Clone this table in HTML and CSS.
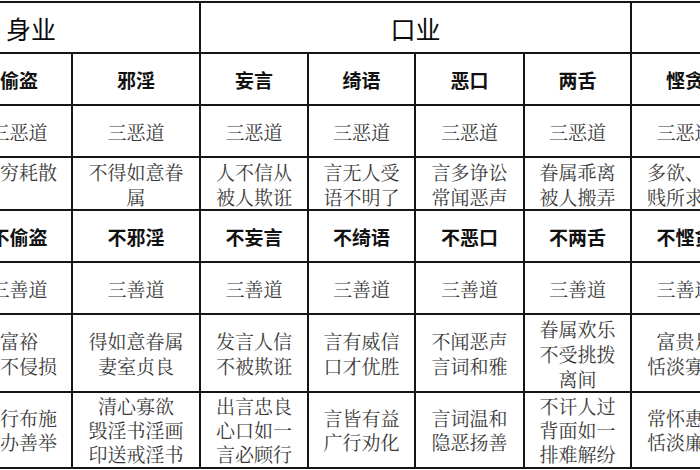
FILE: index.html
```html
<!DOCTYPE html>
<html lang="zh">
<head>
<meta charset="utf-8">
<title>十业</title>
<link rel="stylesheet" href="styles.css">
</head>
<body>
<div class="frame">
<table class="karma">
<colgroup>
<col class="c-shasheng"><col class="c-toudao"><col class="c-xieyin"><col class="c-wangyan"><col class="c-qiyu"><col class="c-ekou"><col class="c-liangshe"><col class="c-qiantan"><col class="c-chenhui"><col class="c-xiejian">
</colgroup>
<tr class="r-group">
<th colspan="3" class="group">身业</th>
<th colspan="4" class="group">口业</th>
<th colspan="3" class="group">意业</th>
</tr>
<tr class="r-head">
<th>杀生</th><th>偷盗</th><th>邪淫</th><th>妄言</th><th>绮语</th><th>恶口</th><th>两舌</th><th>悭贪</th><th>嗔恚</th><th>邪见</th>
</tr>
<tr class="r-fate">
<td>三恶道</td><td>三恶道</td><td>三恶道</td><td>三恶道</td><td>三恶道</td><td>三恶道</td><td>三恶道</td><td>三恶道</td><td>三恶道</td><td>三恶道</td>
</tr>
<tr class="r-result">
<td>短命多病</td><td>贫穷耗散</td><td>不得如意眷<br>属</td><td>人不信从<br>被人欺诳</td><td>言无人受<br>语不明了</td><td>言多诤讼<br>常闻恶声</td><td>眷属乖离<br>被人搬弄</td><td>多欲、贫<br>贱所求难</td><td>常被他人<br>求其长短</td><td>邪见家生<br>其心谄曲</td>
</tr>
<tr class="r-head">
<th>不杀生</th><th>不偷盗</th><th>不邪淫</th><th>不妄言</th><th>不绮语</th><th>不恶口</th><th>不两舌</th><th>不悭贪</th><th>不嗔恚</th><th>不邪见</th>
</tr>
<tr class="r-fate">
<td>三善道</td><td>三善道</td><td>三善道</td><td>三善道</td><td>三善道</td><td>三善道</td><td>三善道</td><td>三善道</td><td>三善道</td><td>三善道</td>
</tr>
<tr class="r-good">
<td>长寿<br>少病</td><td>富裕<br>财不侵损</td><td>得如意眷属<br>妻室贞良</td><td>发言人信<br>不被欺诳</td><td>言有威信<br>口才优胜</td><td>不闻恶声<br>言词和雅</td><td>眷属欢乐<br>不受挑拨<br>离间</td><td>富贵足<br>恬淡寡欲</td><td>相貌端严<br>人皆敬爱</td><td>正信正见<br>智慧明达</td>
</tr>
<tr class="r-deed">
<td>放生<br>护生</td><td>广行布施<br>多办善举</td><td>清心寡欲<br>毁淫书淫画<br>印送戒淫书</td><td>出言忠良<br>心口如一<br>言必顾行</td><td>言皆有益<br>广行劝化</td><td>言词温和<br>隐恶扬善</td><td>不讦人过<br>背面如一<br>排难解纷</td><td>常怀惠施<br>恬淡廉洁</td><td>忍辱柔和<br>慈悲待人</td><td>深信因果<br>亲近善友</td>
</tr>
</table>
</div>
</body>
</html>
```
FILE: styles.css
```css
html, body {
  margin: 0;
  padding: 0;
  background: #ffffff;
  overflow: hidden;
}

.frame {
  width: 700px;
  height: 470px;
  overflow: hidden;
  padding-top: 1px;
}

.karma {
  border-collapse: collapse;
  table-layout: fixed;
  width: 1083px;
  margin-left: -139px;
  font-family: "Noto Serif CJK SC", "Noto Sans CJK SC", sans-serif;
}

.c-shasheng { width: 104px; }
.c-toudao { width: 106px; }
.c-xieyin { width: 128px; }
.c-wangyan { width: 108px; }
.c-qiyu { width: 107px; }
.c-ekou { width: 109px; }
.c-liangshe { width: 107px; }
.c-qiantan { width: 108px; }
.c-chenhui { width: 108px; }
.c-xiejian { width: 108px; }

.karma th,
.karma td {
  border: 2px solid #151515;
  padding: 0;
  text-align: center;
  vertical-align: middle;
  overflow: hidden;
  white-space: nowrap;
}

.karma th {
  font-family: "Noto Sans CJK SC", sans-serif;
  font-weight: 700;
  font-size: 19px;
  color: #111111;
}

.karma th.group {
  font-weight: 400;
  font-size: 25px;
  color: #0a0a0a;
}

.karma td {
  font-size: 19px;
  line-height: 25px;
  color: #3a3a3a;
  font-weight: 400;
}

.r-group { height: 51px; }
.r-head { height: 52px; }
.r-fate { height: 52px; }
.r-result { height: 53px; }
.r-result td { vertical-align: top; padding-top: 1px; }
.r-good { height: 78px; }
.r-deed { height: 76px; }
.r-deed td { line-height: 24px; }
```
